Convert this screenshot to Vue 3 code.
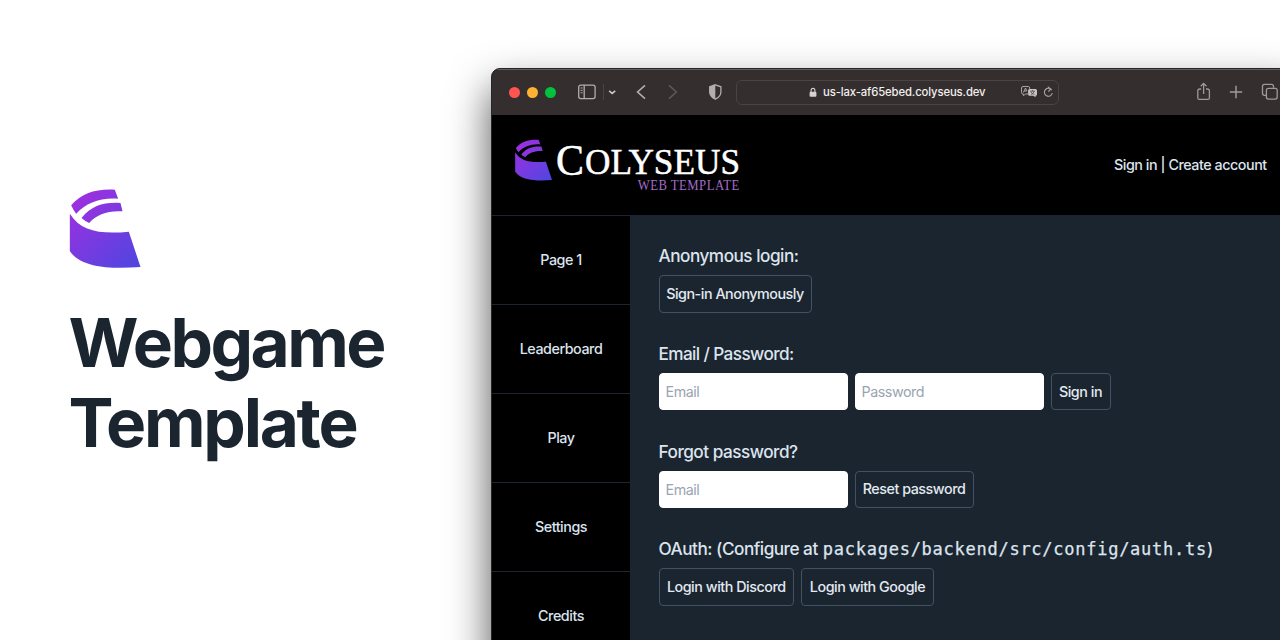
<script setup>
const pages = ['Page 1', 'Leaderboard', 'Play', 'Settings', 'Credits']
</script>

<template>
  <main class="stage">
    <svg width="0" height="0" class="defs">
      <defs>
        <linearGradient id="purple" gradientUnits="userSpaceOnUse" x1="70" y1="80" x2="260" y2="290">
          <stop offset="0" stop-color="#9f2fe0" />
          <stop offset="1" stop-color="#5046e0" />
        </linearGradient>
        <symbol id="mark" viewBox="58 57 213 237">
          <g fill="url(#purple)">
            <path d="M63 106C94 70 136 56 194 59L204 86C151 82 108 98 78 131Q69 120 63 106Z" />
            <path d="M94 144C125 106 162 96 211 99L217 124C174 121 139 133 117 159Q104 153 94 144Z" />
            <path d="M59 131C92 184 151 193 236 185L271 291C185 297 93 295 59 243Z" />
          </g>
        </symbol>
      </defs>
    </svg>

    <section class="intro">
      <svg class="mark"><use href="#mark" /></svg>
      <h1>Webgame<br /><span>Template</span></h1>
    </section>

    <section class="window">
      <div class="toolbar">
        <div class="lights"><i class="red"></i><i class="amber"></i><i class="green"></i></div>
        <svg class="tools-left" width="150" height="20" viewBox="0 0 150 20" fill="none" stroke="#b3adad" stroke-width="1.3">
          <rect x="1.7" y="3.2" width="16.4" height="13.4" rx="2" />
          <path d="M7.2 3.2V16.6" />
          <path d="M3.6 6H5.6M3.6 8.4H5.6M3.6 10.8H5.6" stroke-width="1" />
          <path d="M26.5 2V18" stroke="#4a4343" stroke-width="1" />
          <path d="M32.2 8.8L35.2 11.4L38.2 8.8" stroke="#cbc6c6" stroke-width="1.6" />
          <path d="M68 3.4L60.6 10L68 16.6" stroke-width="1.6" />
          <path d="M92 3.4L99.4 10L92 16.6" stroke="#5e5757" stroke-width="1.6" />
          <path d="M138.3 2.8L143.9 4.8V10Q143.9 14.6 138.3 17.2Q132.7 14.6 132.7 10V4.8Z" />
          <path d="M138.3 2.8V17.2Q132.7 14.6 132.7 10V4.8Z" fill="#b3adad" stroke="none" />
        </svg>
        <div class="address">
          <svg class="lock" width="8" height="11" viewBox="0 0 8 11">
            <rect x="0.6" y="4.8" width="6.8" height="5" rx="1" fill="#d6d2d2" />
            <path d="M2.1 5V3.4Q2.1 1.4 4 1.4Q5.9 1.4 5.9 3.4V5" fill="none" stroke="#d6d2d2" stroke-width="1.1" />
          </svg>
          <span>us-lax-af65ebed.colyseus.dev</span>
          <svg class="address-tools" width="36" height="14" viewBox="0 0 36 14" fill="none" stroke="#aaa4a4">
            <path d="M8 9H5.6L3.4 10.6V9H3Q1.5 9 1.5 7.5V3Q1.5 1.5 3 1.5H8.2Q9.7 1.5 9.7 3V4" />
            <path d="M3.4 7.5L5.5 3L7 6.2M4.2 6H6.6" />
            <path d="M9.6 4H15.5Q17 4 17 5.5V9.2Q17 10.7 15.5 10.7V12.3L13.2 10.7H9.6Q8.1 10.7 8.1 9.2V5.5Q8.1 4 9.6 4Z" fill="#c8c3c3" stroke="none" />
            <path d="M10 6.2H15M12.5 5V6.2M11 9.5Q13.7 8.6 14.1 6.4M11 7Q12 9 14.4 9.5" stroke="#534b4b" stroke-width=".8" />
            <path d="M31.8 5.1A4 4 0 1 0 32.3 8.2M27.7 1.8L30.8 4L28.3 6.6" stroke-width="1.1" />
          </svg>
        </div>
        <svg class="tools-right" width="90" height="22" viewBox="0 0 90 22" fill="none" stroke="#9f9999" stroke-width="1.3">
          <path d="M6.2 8H4.8Q2.8 8 2.8 10V16.9Q2.8 18.4 4.3 18.4H12.9Q14.4 18.4 14.4 16.9V10Q14.4 8 12.4 8H11" />
          <path d="M8.6 13V2.6M5.7 5.3L8.6 2.4L11.5 5.3" />
          <path d="M34.8 11H47.2M41 4.8V17.2" stroke-width="1.5" />
          <rect x="71.4" y="7.3" width="10.8" height="10.8" rx="2" />
          <path d="M71 14.3H69.5Q67.5 14.3 67.5 12.3V5.3Q67.5 3.3 69.5 3.3H76.5Q78.5 3.3 78.5 5.3V6.8" />
        </svg>
      </div>

      <header class="header">
        <svg class="brand" width="240" height="66" viewBox="0 0 240 66">
          <svg x="2" y="4" width="37" height="42"><use href="#mark" /></svg>
          <g class="brand-text">
            <text x="43" y="39.5" font-size="44" textLength="28" lengthAdjust="spacingAndGlyphs">C</text>
            <text x="72" y="39.3" font-size="36" textLength="155" lengthAdjust="spacingAndGlyphs">OLYSEUS</text>
            <text class="brand-sub" x="124.7" y="55.2" font-size="13.6" letter-spacing=".5" textLength="102" lengthAdjust="spacingAndGlyphs">WEB TEMPLATE</text>
          </g>
        </svg>
        <div class="account"><a>Sign in</a> | <a>Create account</a></div>
      </header>

      <div class="body">
        <nav>
          <a v-for="page in pages" :key="page">{{ page }}</a>
        </nav>
        <div class="content">
          <section class="group">
            <h2>Anonymous login:</h2>
            <div class="row"><button class="w-anon">Sign-in Anonymously</button></div>
          </section>
          <section class="group">
            <h2 class="tight">Email / Password:</h2>
            <div class="row">
              <input placeholder="Email" /><input placeholder="Password" />
              <button class="w-sign">Sign in</button>
            </div>
          </section>
          <section class="group">
            <h2>Forgot password?</h2>
            <div class="row"><input placeholder="Email" /><button class="w-reset">Reset password</button></div>
          </section>
          <section class="group">
            <h2>OAuth: (Configure at <code>packages/backend/src/config/auth.ts</code>)</h2>
            <div class="row">
              <button class="w-discord">Login with Discord</button><button class="w-google">Login with Google</button>
            </div>
          </section>
        </div>
      </div>
    </section>
  </main>
</template>

<style>
body { overflow: hidden; }
</style>

<style scoped>
* { box-sizing: border-box; }
.stage {
  display: flex;
  width: 1280px;
  height: 640px;
  overflow: hidden;
  background: #fff;
  font-family: Inter, "Liberation Sans", sans-serif;
}
.defs { position: absolute; }
.intro { flex: none; width: 491px; padding: 189px 0 0 69px; }
.mark { display: block; width: 72px; height: 79px; }
h1 {
  margin: 35px 0 0 -.5px;
  font-size: 67.5px;
  line-height: 80px;
  font-weight: 700;
  letter-spacing: -2.5px;
  color: #1b252f;
  white-space: nowrap;
}
h1 span { letter-spacing: -2.25px; }
.window {
  flex: none;
  width: 810px;
  height: 700px;
  margin-top: 68px;
  border: 1px solid #22272b;
  border-radius: 9px 0 0 0;
  overflow: hidden;
  background: #000;
  box-shadow: 0 20px 42px rgba(0, 0, 0, .68);
}
.toolbar {
  display: flex;
  align-items: center;
  height: 46px;
  padding: 0 0 1px 17px;
  background: #352e2e;
  border-top: 1px solid #635d5e;
}
.lights { display: flex; gap: 7px; width: 68px; }
.lights i { width: 11px; height: 11px; border-radius: 50%; }
.red { background: #ff5550; }
.amber { background: #ffb133; }
.green { background: #02c23d; }
.tools-left { flex: none; margin-right: 9px; }
.address {
  display: flex;
  align-items: center;
  width: 323px;
  height: 25px;
  padding-left: 72px;
  border: 1px solid #4b4444;
  border-radius: 6px;
  color: #f1efef;
  font-size: 11.3px;
  font-weight: 550;
  letter-spacing: -.12px;
}
.address span { width: 205px; margin-left: 6px; white-space: nowrap; }
.address-tools { flex: none; margin-left: -8px; }
.tools-right { flex: none; margin-left: 136px; }
.header {
  display: flex;
  justify-content: space-between;
  height: 100px;
  padding: 20px 33px 0 21px;
}
.brand-text { fill: #fff; stroke: #fff; stroke-width: .5; font-family: "Liberation Serif", serif; }
.brand-sub { fill: #a26ccb; stroke: none; }
.account {
  width: 153px;
  margin: 20px 0 0;
  font-size: 14.3px;
  line-height: 20px;
  font-weight: 450;
  letter-spacing: -.45px;
  color: #dce4ee;
  white-space: nowrap;
}
.body { display: flex; height: 560px; }
nav { width: 139px; border-right: 1px solid #1b252f; }
nav a {
  display: flex;
  align-items: center;
  justify-content: center;
  height: 89.1px;
  padding-bottom: 2px;
  border-top: 1px solid #1c2530;
  color: #dce4ee;
  font-size: 14.3px;
  font-weight: 450;
  letter-spacing: -.45px;
}
.content {
  flex: 1;
  padding: 28px 0 0 27.5px;
  background: #1b252f;
  color: #dce4ee;
}
.group { height: 97.8px; }
h2 {
  margin: 0;
  height: 32px;
  font-size: 17.2px;
  line-height: 25.5px;
  font-weight: 450;
  letter-spacing: -.5px;
  white-space: nowrap;
}
.tight { letter-spacing: -.6px; }
code {
  margin-left: 1px;
  font-family: "DejaVu Sans Mono", monospace;
  font-size: 17px;
  letter-spacing: .74px;
  -webkit-text-stroke: .25px #dce4ee;
}
.row { display: flex; gap: 7px; }
button, input {
  height: 37.5px;
  margin: 0;
  border: 1px solid #415264;
  border-radius: 4px;
  font: 450 14.3px/20px Inter, "Liberation Sans", sans-serif;
  letter-spacing: -.46px;
}
button { padding: 0; background: none; color: #e2e9f2; text-align: center; white-space: nowrap; }
input { width: 189px; padding: 0 6px; border-color: #fff; background: #fff; font-weight: 400; }
input::placeholder { color: #9aa4b2; opacity: 1; }
.w-anon { width: 153px; }
.w-sign { width: 60px; }
.w-reset { width: 119px; }
.w-discord { width: 135.5px; }
.w-google { width: 133px; }
</style>
